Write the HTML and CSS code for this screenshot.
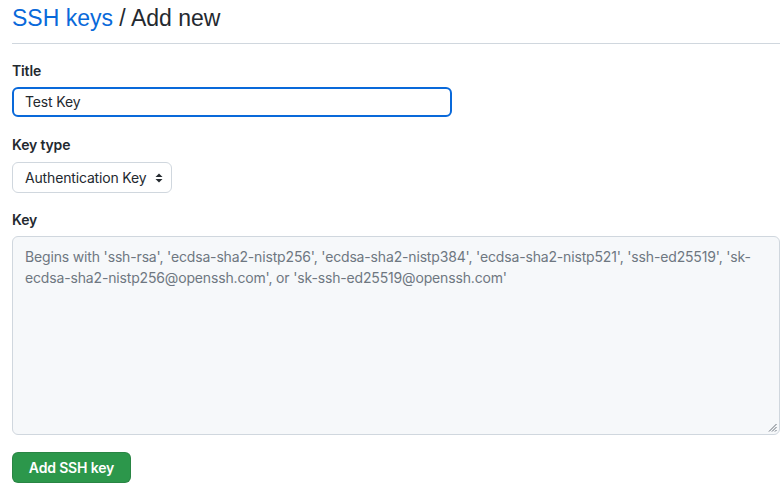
FILE: index.html
```html
<!DOCTYPE html>
<html>
<head>
<meta charset="utf-8">
<link rel="stylesheet" href="styles.css">
</head>
<body>
<div class="page">
  <div class="subhead">
    <h2 class="subhead-heading"><a href="#" class="crumb">SSH keys</a> / Add new</h2>
  </div>
  <form class="form">
    <div class="group">
      <label class="label">Title</label>
      <div class="input focused">Test Key</div>
    </div>
    <div class="group">
      <label class="label">Key type</label>
      <div class="select">
        <span>Authentication Key</span>
        <svg class="caret" width="8" height="10" viewBox="0 0 8 10"><path d="M4 0.5 L7.5 4 H0.5 Z" fill="#24292f"/><path d="M4 9.5 L7.5 6 H0.5 Z" fill="#24292f"/></svg>
      </div>
    </div>
    <div class="group">
      <label class="label">Key</label>
      <div class="textarea">
        <span class="placeholder">Begins with 'ssh-rsa', 'ecdsa-sha2-nistp256', 'ecdsa-sha2-nistp384', 'ecdsa-sha2-nistp521', 'ssh-ed25519', 'sk-<br>ecdsa-sha2-nistp256@openssh.com', or 'sk-ssh-ed25519@openssh.com'</span>
        <svg class="grip" width="9" height="9" viewBox="0 0 9 9"><path d="M8.5 1 L1 8.5 M8.5 4 L4 8.5 M8.5 7 L7 8.5" stroke="#57606a" stroke-width="0.9"/></svg>
      </div>
    </div>
    <div class="actions">
      <button type="button" class="btn-primary">Add SSH key</button>
    </div>
  </form>
</div>
</body>
</html>
```
FILE: styles.css
```css
* { box-sizing: border-box; }
html, body { margin: 0; padding: 0; background: #fff; }
body {
  font-family: Inter, "Liberation Sans", Arial, sans-serif;
  color: #24292f;
  font-size: 14px;
  letter-spacing: -0.16px;
}
.page { padding: 0 4px 0 12px; }
.subhead {
  border-bottom: 1px solid #d0d7de;
  padding: 4px 0 10px;
}
.subhead-heading {
  margin: 0;
  font-family: "Liberation Sans", Arial, sans-serif;
  font-size: 23px;
  font-weight: 400;
  line-height: 29px;
  letter-spacing: 0;
}
.crumb { color: #0969da; text-decoration: none; }
.form { padding-top: 19px; }
.group { margin-bottom: 20px; }
.group:nth-child(2) { margin-bottom: 19px; }
.label {
  display: block;
  font-weight: 600;
  font-size: 14px;
  line-height: 16px;
  margin-bottom: 8px;
}
.group:nth-child(2) .label { margin-bottom: 9px; }
.input {
  width: 440px;
  height: 30px;
  border: 1px solid #d0d7de;
  border-radius: 6px;
  padding: 0 12px;
  line-height: 28px;
}
.input.focused {
  border: 2px solid #0969da;
  padding: 0 11px;
  line-height: 26px;
}
.select {
  display: inline-flex;
  align-items: center;
  gap: 8px;
  height: 31px;
  padding: 0 8px 0 12px;
  border: 1px solid #d0d7de;
  border-radius: 6px;
  background: #fff;
}
.caret { display: block; }
.textarea {
  position: relative;
  height: 199px;
  border: 1px solid #d0d7de;
  border-radius: 6px;
  background: #f6f8fa;
  padding: 9px 12px;
  line-height: 21px;
  white-space: nowrap;
}
.placeholder { color: #6e7781; }
.grip { position: absolute; right: 2px; bottom: 2px; }
.actions { margin-top: -3px; }
.btn-primary {
  font-family: inherit;
  font-size: 14px;
  font-weight: 600;
  letter-spacing: -0.16px;
  color: #fff;
  background: #2c974b;
  border: 1px solid rgba(27,31,36,0.15);
  border-radius: 6px;
  width: 119px;
  height: 31px;
  padding: 0;
}
```
